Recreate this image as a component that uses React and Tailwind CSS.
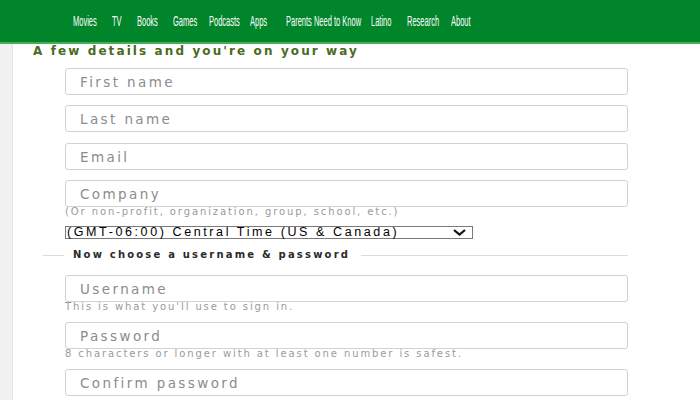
import React from 'react';

const navItems = [
    { label: 'Movies', cls: 'w-[39px]' },
    { label: 'TV', cls: 'w-[25px]' },
    { label: 'Books', cls: 'w-[36px]' },
    { label: 'Games', cls: 'w-[36px]' },
    { label: 'Podcasts', cls: 'w-[41px]' },
    { label: 'Apps', cls: 'w-[36px]' },
    { label: 'Parents Need to Know', cls: 'w-[85px]' },
    { label: 'Latino', cls: 'w-[36px]' },
    { label: 'Research', cls: 'w-[44px]' },
    { label: 'About', cls: 'w-[30px]' },
];

const Field = ({ placeholder, className = '' }) => (
    <input
        type="text"
        placeholder={placeholder}
        className={`block w-full h-[27px] border border-[#d2d2d2] rounded-[3px] bg-white pl-[14px] text-[13.5px] tracking-[2.4px] text-[#333] placeholder:text-[#8c8c8c] outline-none font-['DejaVu_Sans',sans-serif] ${className}`}
    />
);

const Hint = ({ children }) => (
    <div className="h-[10px] text-[10px] leading-[10px] tracking-[1.9px] text-[#9a9a9a] whitespace-nowrap font-['DejaVu_Sans',sans-serif]">
        {children}
    </div>
);

const App = () => {
    return (
        <div className="w-[700px] h-[400px] overflow-hidden bg-white flex flex-col">
            {/* top nav */}
            <header className="h-[44px] shrink-0 bg-[#00852a] border-b-2 border-[#46ad52] flex items-center pl-[73px]">
                {navItems.map((item) => (
                    <div key={item.label} className={`${item.cls} shrink-0 h-[20px] flex items-center`}>
                        <span className="inline-block origin-left scale-x-[0.5] whitespace-nowrap text-white text-[15px] leading-[20px] font-['Liberation_Sans',sans-serif]">
                            {item.label}
                        </span>
                    </div>
                ))}
            </header>

            <div className="flex flex-1 min-h-0">
                <div className="w-[13px] shrink-0 bg-[#f1f1f1] border-r border-[#e4e4e4]"></div>

                <main className="flex-1">
                    <h2 className="pl-[20px] h-[14px] text-[12px] leading-[14px] tracking-[2.1px] font-bold text-[#4b6a22] whitespace-nowrap font-['DejaVu_Sans',sans-serif]">
                        A few details and you're on your way
                    </h2>

                    <div className="pl-[52px] w-[615px]">
                        <Field placeholder="First name" className="mt-[10px]" />
                        <Field placeholder="Last name" className="mt-[10px]" />
                        <Field placeholder="Email" className="mt-[11px]" />
                        <Field placeholder="Company" className="mt-[10px]" />
                        <Hint>(Or non-profit, organization, group, school, etc.)</Hint>

                        <div className="mt-[9px] w-[408px] h-[13px] border border-[#7a7a7a] flex items-center justify-between pl-[1px] pr-[6px] bg-white">
                            <span className="text-[12.5px] leading-[11px] tracking-[2.6px] text-black whitespace-nowrap font-['Liberation_Sans',sans-serif]">
                                (GMT-06:00) Central Time (US &amp; Canada)
                            </span>
                            <svg width="13" height="7" viewBox="0 0 13 7" fill="none">
                                <polyline points="1,1 6.5,5.5 12,1" stroke="#111" strokeWidth="2.2" />
                            </svg>
                        </div>

                        {/* section divider */}
                        <div className="-ml-[22px] w-[585px] mt-[8px] h-[16px] flex items-center">
                            <div className="w-[21px] h-px bg-[#dcdcdc]"></div>
                            <span className="ml-[9px] text-[10px] leading-[16px] tracking-[2.2px] font-bold text-[#2a2a2a] whitespace-nowrap font-['DejaVu_Sans',sans-serif]">
                                Now choose a username &amp; password
                            </span>
                            <div className="ml-[11px] flex-1 h-px bg-[#dcdcdc]"></div>
                        </div>

                        <Field placeholder="Username" className="mt-[12px]" />
                        <Hint>This is what you'll use to sign in.</Hint>
                        <Field placeholder="Password" className="mt-[10px]" />
                        <Hint>8 characters or longer with at least one number is safest.</Hint>
                        <Field placeholder="Confirm password" className="mt-[10px]" />
                    </div>
                </main>
            </div>
        </div>
    );
};

export default App;
